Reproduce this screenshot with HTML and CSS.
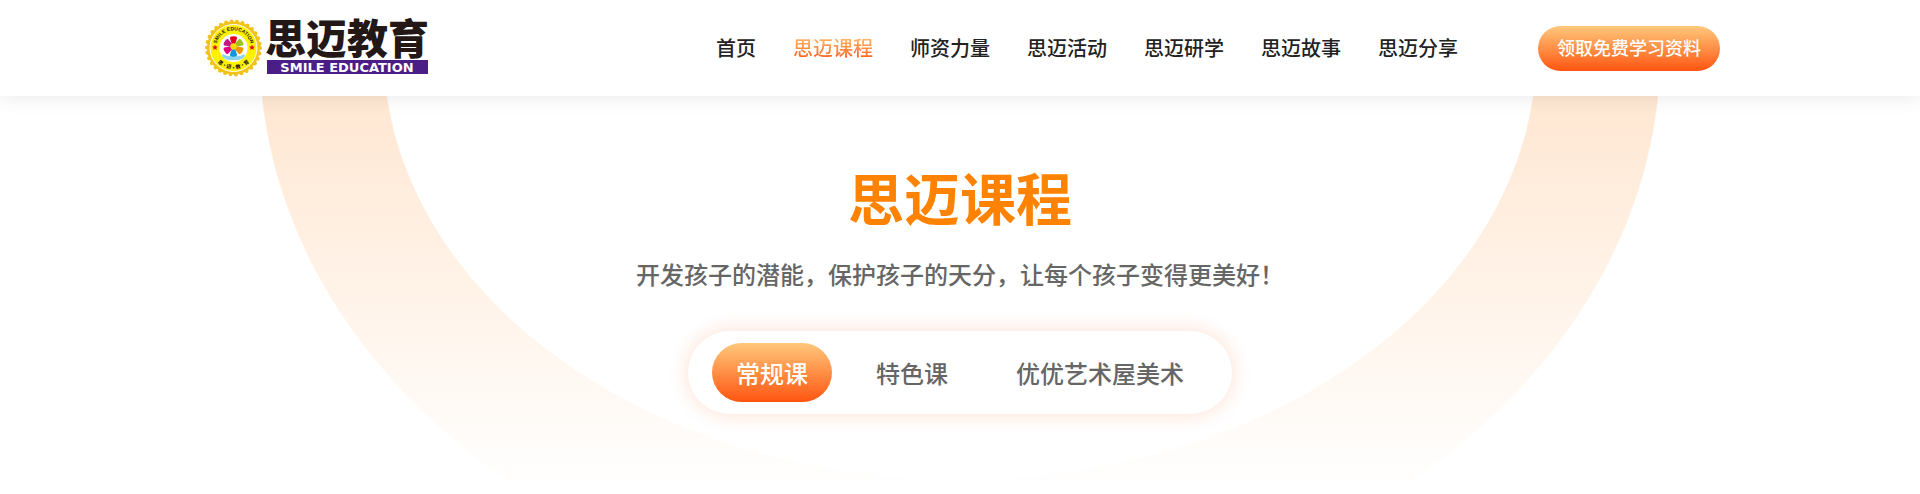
FILE: index.html
```html
<!DOCTYPE html>
<html lang="zh-CN">
<head>
    <meta charset="UTF-8">
    <meta name="viewport" content="width=device-width, initial-scale=1.0">
    <title>思迈课程</title>
    <link rel="stylesheet" href="styles.css">
</head>
<body>
    <header class="header">
        <div class="header-inner">
            <a class="logo" href="#" aria-label="思迈教育">
                <svg width="228" height="60" viewBox="0 0 228 60">
                    <defs>
                        <path id="arcTop" d="M12.500 34A17.500 17.500 0 1 1 46.500 34"/>
                        <path id="arcBottom" d="M9 37A22 22 0 0 0 50 37"/>
                        <path id="petal" d="M-1.500-2L-3.700-8.500Q-3.500-10.500 0-10.200Q3.500-10.500 3.700-8.500L1.500-2z"/>
                    </defs>
                    <!-- badge -->
                    <circle cx="29.500" cy="30" r="26.500" fill="#f2c21a"/>
                    <circle cx="29.500" cy="30" r="26.500" fill="none" stroke="#f2c21a" stroke-width="4" stroke-linecap="round" stroke-dasharray="0 5.550"/>
                    <circle cx="29.500" cy="30" r="23.500" fill="#fff100" stroke="#fff" stroke-width="1"/>
                    <circle cx="29.500" cy="30" r="14" fill="#fff"/>
                    <text class="badge-en"><textPath href="#arcTop" startOffset="50%">SMILE EDUCATION</textPath></text>
                    <text class="badge-cn"><textPath href="#arcBottom" startOffset="50%">思·迈·教·育</textPath></text>
                    <g fill="#e60012">
                        <path id="star" d="M11 26.500l.8 1.900 2 .2-1.500 1.300.5 2-1.800-1.100-1.800 1.100.5-2-1.500-1.300 2-.2z"/>
                        <use href="#star" x="37"/>
                    </g>
                    <!-- flower -->
                    <path d="M18 38q3 5 11.500 4q8.500 1 11.500-4l-1-2q-4 3-10.500 2q-6.500 1-10.500-2z" fill="#8fd3f2"/>
                    <g transform="translate(29.500 28.500)">
                        <use href="#petal" fill="#e60020"/>
                        <use href="#petal" fill="#9bc31c" transform="rotate(60)"/>
                        <use href="#petal" fill="#f39200" transform="rotate(120)"/>
                        <use href="#petal" fill="#1695dc" transform="rotate(180)"/>
                        <use href="#petal" fill="#e4007f" transform="rotate(240)"/>
                        <use href="#petal" fill="#c2188b" transform="rotate(300)"/>
                        <circle r="3.200" fill="#ffd900"/>
                    </g>
                    <!-- name -->
                    <text class="logo-cn" x="61" y="36">思迈教育</text>
                    <rect x="63" y="42" width="161" height="14" fill="#4b1d87"/>
                    <text class="logo-en" x="143" y="54">SMILE EDUCATION</text>
                </svg>
            </a>
            <nav class="nav">
                <a href="#">首页</a>
                <a href="#" class="active">思迈课程</a>
                <a href="#">师资力量</a>
                <a href="#">思迈活动</a>
                <a href="#">思迈研学</a>
                <a href="#">思迈故事</a>
                <a href="#">思迈分享</a>
            </nav>
            <button class="get-btn" type="button">领取免费学习资料</button>
        </div>
    </header>

    <main class="banner">
        <h1>思迈课程</h1>
        <p>开发孩子的潜能，保护孩子的天分，让每个孩子变得更美好！</p>
        <div class="tabs">
            <button class="tab active" type="button">常规课</button>
            <button class="tab" type="button">特色课</button>
            <button class="tab" type="button">优优艺术屋美术</button>
        </div>
    </main>
</body>
</html>
```

FILE: styles.css
```css
* {
    box-sizing: border-box;
}

body {
    margin: 0;
    min-height: 100vh;
    display: flex;
    flex-direction: column;
    font-family: "Noto Sans CJK SC", sans-serif;
    font-weight: 500;
    background-color: #fff;
}

a {
    text-decoration: none;
}

button {
    border: none;
    font-family: inherit;
    font-weight: inherit;
    cursor: pointer;
}

.header {
    position: relative;
    z-index: 1;
    background-color: #fff;
    box-shadow: 0 0 20px rgba(0, 0, 0, 0.1);
}

.header-inner {
    display: flex;
    align-items: center;
    max-width: 1520px;
    height: 96px;
    margin: 0 auto;
}

.logo {
    margin-left: 4px;
}

.logo svg {
    display: block;
    overflow: visible;
}

.logo-cn {
    font-size: 41px;
    font-weight: 900;
    fill: #231815;
}

.logo-en {
    font-family: "DejaVu Sans", sans-serif;
    font-size: 13px;
    font-weight: 700;
    fill: #fff;
    text-anchor: middle;
}

.badge-en {
    font-family: "Liberation Sans", sans-serif;
    font-size: 5px;
    font-weight: 700;
    fill: #231815;
    text-anchor: middle;
}

.badge-cn {
    font-size: 5px;
    font-weight: 900;
    fill: #231815;
    text-anchor: middle;
}

.nav {
    display: flex;
    gap: 37px;
    margin-left: auto;
}

.nav a {
    font-size: 20px;
    line-height: 28px;
    color: #222;
}

.nav a.active {
    color: transparent;
    background: linear-gradient(#ffc87c, #ff5510);
    -webkit-background-clip: text;
    background-clip: text;
}

.get-btn {
    height: 45px;
    margin-left: 80px;
    padding: 0 19px 2px;
    border-radius: 23px;
    font-size: 18px;
    color: #fff;
    background: linear-gradient(#ffc87c, #ff5510);
}

/* the arch: two ellipses masking a vertical fade */
.banner {
    flex: 1;
    display: flex;
    flex-direction: column;
    align-items: center;
    padding: 58px 20px 60px;
    background:
        radial-gradient(577px 430px at 50% -46px, #fff 99.8%, transparent 100%),
        radial-gradient(701px 564px at 50% -46px, transparent 99.8%, #fff 100%),
        linear-gradient(#ffe7d2, #fff8f2 280px, #fff 396px);
}

.banner h1 {
    margin: 0;
    font-size: 56px;
    line-height: 84px;
    color: #ff8200;
}

.banner p {
    margin: 18px 0 39px;
    font-size: 24px;
    line-height: 36px;
    color: #666;
}

.tabs {
    display: flex;
    gap: 20px;
    padding: 12px 24px;
    border-radius: 42px;
    background-color: #fff;
    box-shadow: 0 0 20px rgba(255, 85, 16, 0.2);
}

.tab {
    height: 59px;
    padding: 0 24px;
    border-radius: 30px;
    font-size: 24px;
    color: #666;
    background: none;
}

.tab.active {
    color: #fff;
    background: linear-gradient(#ffc87c, #ff5510);
}
```
